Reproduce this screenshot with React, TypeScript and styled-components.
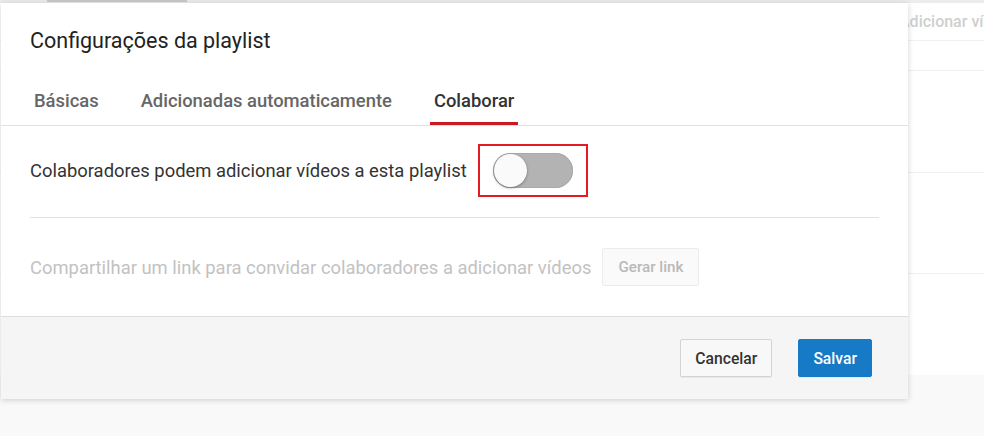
import styled, { createGlobalStyle } from 'styled-components';

const GlobalStyle = createGlobalStyle`
  html, body {
    margin: 0;
    padding: 0;
    background: #f9f9f9;
    font-family: Roboto, 'Liberation Sans', Arial, sans-serif;
  }
`;

const Page = styled.div`
  position: relative;
  width: 984px;
  height: 436px;
  overflow: hidden;
  background: #f9f9f9;
`;

const BackPanel = styled.div`
  height: 375px;
  background: #fff;
  display: flex;
  flex-direction: column;
`;

const TopStrip = styled.div`
  height: 3px;
  background: #ececec;
  display: flex;
  padding-left: 47px;
`;

const StripSegment = styled.div`
  width: 140px;
  height: 2px;
  background: #c9c9c9;
`;

const BackHeader = styled.div`
  height: 37px;
  border-bottom: 1px solid #f2f2f2;
  display: flex;
  align-items: center;
  padding-left: 899px;
  font-size: 16px;
  font-weight: 500;
  color: #cfcfcf;
  white-space: nowrap;
  overflow: hidden;
`;

const BackRow = styled.div<{ $h: number }>`
  height: ${(p) => p.$h}px;
  border-bottom: 1px solid #f0f0f0;
  flex-shrink: 0;
`;

const Dialog = styled.div`
  position: absolute;
  left: 1px;
  top: 3px;
  width: 907px;
  background: #fff;
  box-shadow: 0 1px 6px rgba(0, 0, 0, 0.18);
  display: flex;
  flex-direction: column;
`;

const Header = styled.div`
  padding: 26px 29px 0;
`;

const Title = styled.h2`
  margin: 0;
  font-size: 21.5px;
  line-height: 24px;
  font-weight: 400;
  color: #222;
`;

const TabBar = styled.div`
  margin-top: 36px;
  padding-left: 29px;
  display: flex;
  gap: 34px;
  border-bottom: 1px solid #e2e2e2;
`;

const Tab = styled.div<{ $active?: boolean }>`
  padding: 0 4px 9px;
  font-size: 18.4px;
  line-height: 24px;
  font-weight: 500;
  color: ${(p) => (p.$active ? '#333' : '#666')};
  border-bottom: 3px solid ${(p) => (p.$active ? '#cc181e' : 'transparent')};
`;

const Body = styled.div`
  padding: 18px 29px 30px;
  display: flex;
  flex-direction: column;
`;

const Row = styled.div`
  display: flex;
  align-items: center;
  gap: 11px;
`;

const Label = styled.span<{ $disabled?: boolean }>`
  font-size: 18.4px;
  color: ${(p) => (p.$disabled ? '#c2c2c2' : '#333')};
  white-space: nowrap;
`;

const Highlight = styled.div`
  width: 106px;
  height: 49px;
  border: 2px solid #e31b23;
  display: flex;
  align-items: center;
  justify-content: center;
`;

const Track = styled.div`
  width: 80px;
  height: 35px;
  border-radius: 18px;
  background: #b3b3b3;
  box-shadow: inset 0 0 0 1px #a9a9a9;
  display: flex;
  align-items: center;
  padding-left: 1px;
  box-sizing: border-box;
`;

const Knob = styled.div`
  width: 33px;
  height: 33px;
  border-radius: 50%;
  background: #fafafa;
  box-shadow: 0 1px 3px rgba(0, 0, 0, 0.35);
`;

const Divider = styled.hr`
  margin: 20px 0 30px;
  border: 0;
  border-top: 1px solid #e2e2e2;
`;

const ShareRow = styled.div`
  display: flex;
  align-items: center;
  gap: 11px;
`;

const GhostButton = styled.button`
  height: 38px;
  padding: 0 15px;
  border: 1px solid #ececec;
  border-radius: 2px;
  background: #fafafa;
  color: #b9b9b9;
  font-family: inherit;
  font-size: 15.2px;
  font-weight: 500;
`;

const Footer = styled.div`
  border-top: 1px solid #dedede;
  background: #f5f5f5;
  padding: 22px 36px 22px;
  display: flex;
  justify-content: flex-end;
  gap: 26px;
`;

const ActionButton = styled.button<{ $primary?: boolean }>`
  height: 38px;
  padding: 0 14px;
  border-radius: 2px;
  font-family: inherit;
  font-size: 15.7px;
  font-weight: 500;
  border: 1px solid ${(p) => (p.$primary ? '#167ac6' : '#d3d3d3')};
  background: ${(p) => (p.$primary ? '#167ac6' : '#f8f8f8')};
  color: ${(p) => (p.$primary ? '#fff' : '#333')};
  box-shadow: 0 1px 0 rgba(0, 0, 0, 0.05);
`;

export default function App() {
  return (
    <Page>
      <GlobalStyle />
      <BackPanel>
        <TopStrip>
          <StripSegment />
        </TopStrip>
        <BackHeader>Adicionar vídeos</BackHeader>
        <BackRow $h={29} />
        <BackRow $h={101} />
        <BackRow $h={100} />
      </BackPanel>
      <Dialog>
        <Header>
          <Title>Configurações da playlist</Title>
        </Header>
        <TabBar>
          <Tab>Básicas</Tab>
          <Tab>Adicionadas automaticamente</Tab>
          <Tab $active>Colaborar</Tab>
        </TabBar>
        <Body>
          <Row>
            <Label>Colaboradores podem adicionar vídeos a esta playlist</Label>
            <Highlight>
              <Track>
                <Knob />
              </Track>
            </Highlight>
          </Row>
          <Divider />
          <ShareRow>
            <Label $disabled>Compartilhar um link para convidar colaboradores a adicionar vídeos</Label>
            <GhostButton>Gerar link</GhostButton>
          </ShareRow>
        </Body>
        <Footer>
          <ActionButton>Cancelar</ActionButton>
          <ActionButton $primary>Salvar</ActionButton>
        </Footer>
      </Dialog>
    </Page>
  );
}
